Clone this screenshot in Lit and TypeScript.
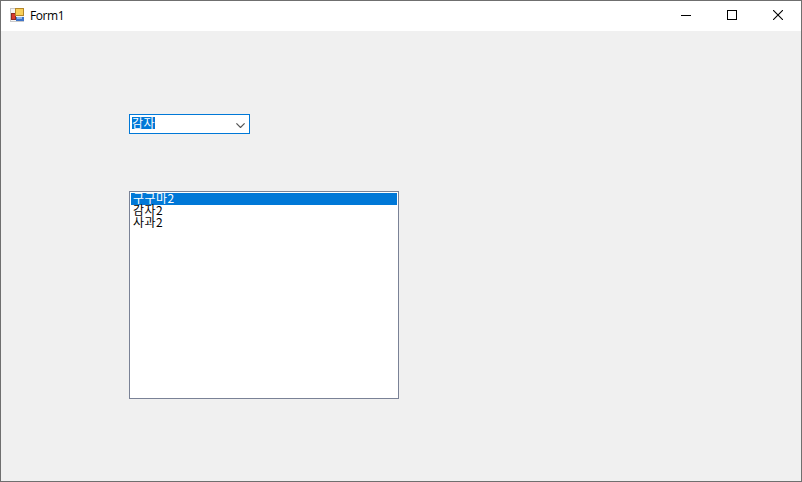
import { LitElement, html, css } from "lit";
import { customElement } from "lit/decorators.js";

@customElement("app-root")
export class AppRoot extends LitElement {
  static styles = css`
    :host { display: block; width: 802px; height: 482px; }
    .window {
      box-sizing: border-box; width: 802px; height: 482px;
      border: 1px solid #6f6f6f; background: #f0f0f0;
      display: flex; flex-direction: column; overflow: hidden;
      font-family: "Noto Sans CJK KR", "Liberation Sans", sans-serif;
    }
    .titlebar {
      height: 30px; flex: none; background: #fff; display: flex; align-items: center;
      padding-left: 9px;
    }
    .appicon { width: 14px; height: 14px; margin: 0 6px 2px 0; flex: none; display: block; }
    .title {
      flex: 1; font: 12px "Open Sans", "Liberation Sans", sans-serif; color: #000;
      letter-spacing: -0.4px; margin-bottom: 2px;
    }
    .btn {
      box-sizing: border-box; width: 46px; height: 30px; padding-bottom: 2px;
      display: flex; align-items: center; justify-content: center; flex: none;
    }
    .btn svg { display: block; }
    .client {
      flex: 1; display: flex; flex-direction: column; align-items: flex-start;
      padding: 83px 0 0 128px;
    }
    .combo {
      box-sizing: border-box; width: 121px; height: 20px; background: #fff;
      border: 1px solid #0078d7; display: flex; align-items: flex-start; padding: 2px 0 0 2px;
      margin-bottom: 57px;
    }
    .combo-text {
      background: #0078d7; color: #fff; font-size: 12px; line-height: 11px; height: 12px;
      letter-spacing: 0.5px; white-space: nowrap;
    }
    .chev { margin: 6px 4px 0 auto; flex: none; display: block; }
    .list {
      box-sizing: border-box; width: 270px; height: 208px; background: #fff;
      border: 1px solid #7a8296; padding: 1px; display: flex; flex-direction: column;
    }
    .item {
      height: 12px; line-height: 10px; font-size: 12px; color: #000; padding-left: 2px;
      letter-spacing: 0.5px; white-space: nowrap;
    }
    .item.sel { background: #0078d7; color: #fff; }
  `;

  render() {
    return html`
      <div class="window">
        <div class="titlebar">
          <svg class="appicon" viewBox="0 0 14 14" shape-rendering="crispEdges">
            <rect x="0" y="0" width="14" height="14" fill="#c9c9c9"/>
            <rect x="1" y="1" width="4" height="3" fill="#f4f4f4"/>
            <rect x="1" y="4" width="5" height="9" fill="#f4f4f4"/>
            <rect x="6" y="8" width="8" height="1" fill="#f4f4f4"/>
            <rect x="1" y="5" width="5" height="7" fill="#8e2a22"/>
            <rect x="2" y="6" width="3" height="5" fill="#d8392e"/>
            <rect x="5" y="0" width="9" height="8" fill="#b5872a"/>
            <rect x="6" y="1" width="7" height="6" fill="#f8cf5a"/>
            <rect x="6" y="9" width="8" height="4" fill="#3f74c9"/>
            <rect x="7" y="9" width="5" height="2" fill="#8fb8ec"/>
          </svg>
          <span class="title">Form1</span>
          <div class="btn">
            <svg width="10" height="10" viewBox="0 0 10 10"><rect x="0" y="5" width="10" height="1" fill="#000"/></svg>
          </div>
          <div class="btn">
            <svg width="10" height="10" viewBox="0 0 10 10"><rect x="0.5" y="0.5" width="9" height="9" fill="none" stroke="#000"/></svg>
          </div>
          <div class="btn">
            <svg width="10" height="10" viewBox="0 0 10 10"><path d="M0 0L10 10M10 0L0 10" stroke="#000" stroke-width="1.1" fill="none"/></svg>
          </div>
        </div>
        <div class="client">
          <div class="combo">
            <span class="combo-text">감자</span>
            <svg class="chev" width="9" height="5" viewBox="0 0 9 5"><path d="M0.4 0.4L4.5 4.5L8.6 0.4" stroke="#555" stroke-width="1.2" fill="none"/></svg>
          </div>
          <div class="list">
            <div class="item sel">구구마2</div>
            <div class="item">감자2</div>
            <div class="item">사과2</div>
          </div>
        </div>
      </div>
    `;
  }
}
